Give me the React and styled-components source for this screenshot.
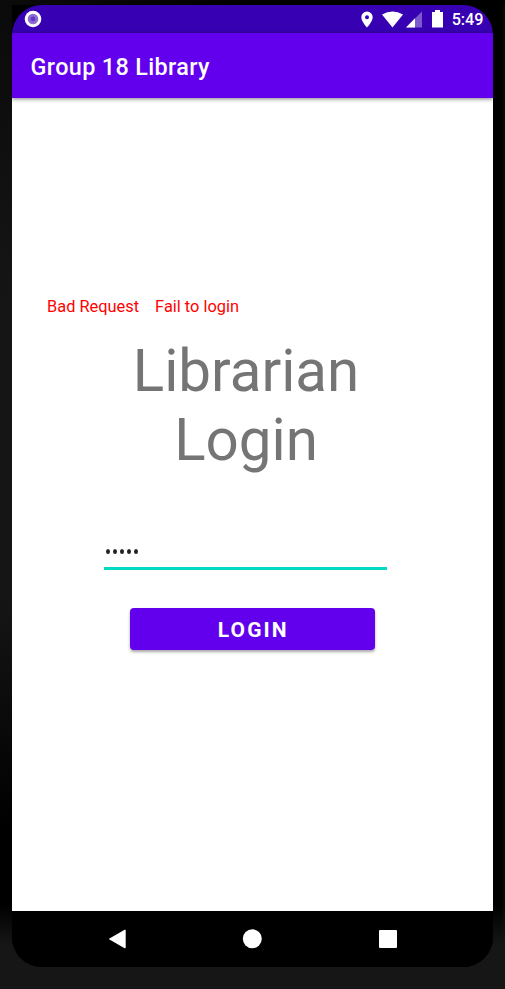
import React from "react";
import styled, { createGlobalStyle } from "styled-components";

const GlobalStyle = createGlobalStyle`
  * { box-sizing: border-box; }
  body { margin: 0; background: #000; font-family: Roboto, sans-serif; }
`;

const Device = styled.main`
  width: 505px;
  height: 989px;
  padding: 5px 12px 22px;
  overflow: hidden;
  background:
    linear-gradient(#161616, #161616) bottom / 100% 22px no-repeat,
    linear-gradient(90deg, #0b0b0b, #000 50%) top / 100% 5px no-repeat,
    linear-gradient(180deg, transparent 905px, #161616 945px) right / 12px 100% no-repeat,
    linear-gradient(90deg, #000 70%, #0c0c0c) right / 12px 100% no-repeat,
    linear-gradient(180deg, #0a0a0a 0, #151515 300px, #151515 600px, #000 830px, #000 905px, #161616 945px) left / 12px 100% no-repeat,
    linear-gradient(#000 900px, #161616 930px);
`;

const Screen = styled.div`
  display: flex;
  flex-direction: column;
  height: 962px;
  border-radius: 30px;
  overflow: hidden;
  background: #000;
`;

const StatusBar = styled.header`
  display: flex;
  align-items: center;
  justify-content: space-between;
  flex: 0 0 28px;
  height: 28px;
  min-height: 0;
  padding: 0 9.5px 0 12px;
  background: #3700b3;
  color: #fff;
`;

const StatusIcons = styled.div`
  display: flex;
  align-items: center;
  height: 28px;
`;

const Icon = styled.svg`
  display: block;
  flex: none;
  margin-right: ${({ $gap = 0 }) => $gap}px;
`;

const Clock = styled.time`
  font-size: 16.2px;
  font-weight: 500;
  line-height: 27px;
  padding-top: 1px;
`;

const AppBar = styled.div`
  position: relative;
  flex: 0 0 65px;
  height: 65px;
  min-height: 0;
  padding: 0 18.5px;
  background: #6200ee;
  box-shadow: 0 1px 4px rgba(0, 0, 0, 0.5);
`;

const Title = styled.h1`
  margin: 0;
  color: #fff;
  font-size: 23.4px;
  font-weight: 500;
  line-height: 68px;
  height: 65px;
  letter-spacing: 0.36px;
  white-space: nowrap;
`;

const Content = styled.section`
  display: flex;
  flex-direction: column;
  flex: 1;
  padding-top: 199px;
  background: #fff;
`;

const Errors = styled.div`
  display: flex;
  gap: 16px;
  padding-left: 35px;
  color: #f00;
  font-size: 16.4px;
  line-height: 20px;
  white-space: nowrap;
`;

const Heading = styled.h2`
  margin: 20px 0 0 92.5px;
  width: 283px;
  color: #757575;
  font-size: 58.3px;
  font-weight: 400;
  line-height: 68.5px;
  text-align: center;
`;

const Password = styled.div`
  display: flex;
  align-items: center;
  gap: 3px;
  width: 283px;
  height: 36px;
  margin: 60px 0 0 92px;
  padding: 1px 2px 0;
  border-bottom: 3px solid #03dac5;
`;

const Dot = styled.span`
  width: 4px;
  height: 5px;
  border-radius: 50%;
  background: #222;
`;

const LoginButton = styled.button`
  width: 245.5px;
  height: 42px;
  margin: 38px 0 0 117.5px;
  padding: 1px 0 0 2px;
  border: 0;
  border-radius: 4px;
  background: #6200ee;
  box-shadow: 0 2px 3px rgba(0, 0, 0, 0.35);
  color: #fff;
  font: 700 21px/43px Roboto, sans-serif;
  letter-spacing: 2.1px;
`;

const NavBar = styled.nav`
  display: flex;
  align-items: center;
  flex: 0 0 56px;
  padding-left: 96px;
  background: #000;
`;

export default function App() {
  return (
    <>
      <GlobalStyle />
      <Device>
        <Screen>
          <StatusBar>
            <Icon width="18" height="18" viewBox="0 0 18 18">
              <circle cx="9" cy="9" r="8.3" fill="#fff" />
              <circle cx="9" cy="9" r="5.3" fill="#8d6bd3" />
              <circle cx="9" cy="9" r="2.4" fill="#6538c2" />
            </Icon>
            <StatusIcons>
              <Icon width="12" height="17" viewBox="0 0 12 17" $gap={9}>
                <path fillRule="evenodd" fill="#fff" d="M6 .5A5.7 5.7 0 0 0 .3 6.2C.3 10.4 6 16.5 6 16.5s5.7-6.1 5.7-10.3A5.7 5.7 0 0 0 6 .5Zm0 3.7a2 2 0 1 1 0 4 2 2 0 0 1 0-4Z" />
              </Icon>
              <Icon width="21" height="17" viewBox="0 0 21 17" $gap={3}>
                <path fill="#fff" d="M0 3.6Q10.5-2.6 21 3.6L10.5 16.5Z" />
              </Icon>
              <Icon width="16" height="17" viewBox="0 0 16 17" $gap={10}>
                <path fill="#fff" fillOpacity=".35" d="M16 .5v16H0Z" />
                <path fill="#fff" d="M9 7.2v9.3H0Z" />
              </Icon>
              <Icon width="11" height="18" viewBox="0 0 11 18" $gap={8.5}>
                <path fill="#fff" d="M3 0h5v2h3v15.5H0V2h3Z" />
              </Icon>
              <Clock>5:49</Clock>
            </StatusIcons>
          </StatusBar>
          <AppBar>
            <Title>Group 18 Library</Title>
          </AppBar>
          <Content>
            <Errors>
              <span>Bad Request</span>
              <span>Fail to login</span>
            </Errors>
            <Heading>Librarian Login</Heading>
            <Password aria-label="Password">
              {[0, 1, 2, 3, 4].map((i) => (
                <Dot key={i} />
              ))}
            </Password>
            <LoginButton>LOGIN</LoginButton>
          </Content>
          <NavBar>
            <Icon width="18" height="20" viewBox="0 0 18 20" $gap={116}>
              <path d="M1.8 10 17 1.4v17.2Z" fill="#fff" stroke="#fff" strokeWidth="1.4" strokeLinejoin="round" />
            </Icon>
            <Icon width="20" height="20" viewBox="0 0 20 20" $gap={117}>
              <circle cx="10.3" cy="9.8" r="9.5" fill="#fff" />
            </Icon>
            <Icon width="18" height="18" viewBox="0 0 18 18">
              <rect width="18" height="18" rx="1" fill="#fff" />
            </Icon>
          </NavBar>
        </Screen>
      </Device>
    </>
  );
}
